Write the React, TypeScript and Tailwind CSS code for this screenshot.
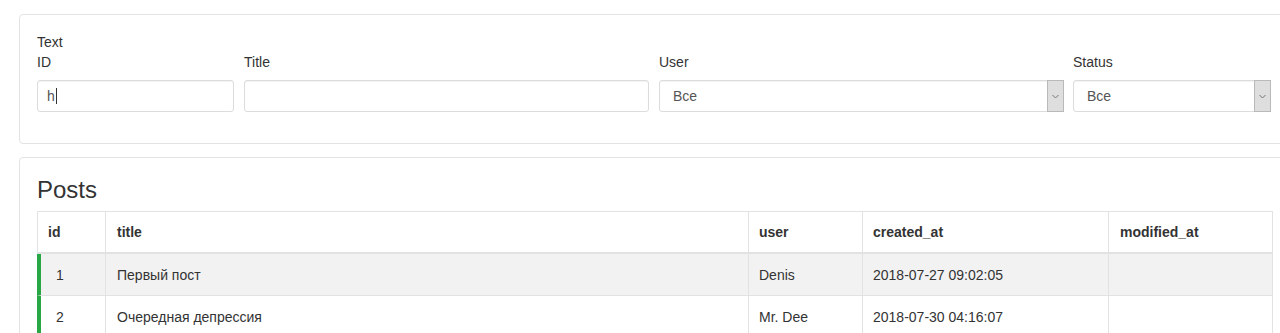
import React from 'react';

interface Post {
  id: number;
  title: string;
  user: string;
  createdAt: string;
  modifiedAt: string;
}

const posts: Post[] = [
  { id: 1, title: 'Первый пост', user: 'Denis', createdAt: '2018-07-27 09:02:05', modifiedAt: '' },
  { id: 2, title: 'Очередная депрессия', user: 'Mr. Dee', createdAt: '2018-07-30 04:16:07', modifiedAt: '' },
];

const FakeSelect: React.FC<{ value: string }> = ({ value }) => (
  <div className="flex h-[32px] rounded-[3px] border border-[#dcdcdc] bg-white shadow-[inset_0_1px_1px_rgba(0,0,0,0.05)]">
    <div className="flex flex-1 items-center pl-[13px] text-[14px] text-[#555]">{value}</div>
    <div className="-my-px -mr-px flex w-[17px] items-center justify-center border border-[#b9b9b9] bg-[#dedede]">
      <svg width="7" height="5" viewBox="0 0 7 5" fill="none">
        <path d="M0.5 1L3.5 4L6.5 1" stroke="#777" strokeWidth="1" />
      </svg>
    </div>
  </div>
);

const cols = 'grid grid-cols-[69px_643px_114px_246px_164px]';
const cell = 'flex items-center border-r border-b border-[#e2e2e2]';

const App: React.FC = () => {
  return (
    <div className="h-[333px] w-[1280px] overflow-hidden bg-white pt-[14px] text-[#333] font-['Liberation_Sans',Arial,sans-serif]">
      <div className="ml-[19px] w-[1271px]">
        {/* filters */}
        <div className="rounded-[4px] border border-[#e3e3e3] px-[17px] pt-[17px] pb-[31px]">
          <div className="text-[14px] leading-[20px]">Text</div>
          <div className="flex">
            <div className="w-[197px]">
              <label className="mb-[8px] block text-[14px] leading-[20px]">ID</label>
              <div className="flex h-[32px] items-center rounded-[3px] border border-[#dcdcdc] pl-[9px] text-[14px] text-[#555] shadow-[inset_0_1px_1px_rgba(0,0,0,0.05)]">
                h<span className="ml-px inline-block h-[16px] w-px bg-[#333]" />
              </div>
            </div>
            <div className="ml-[10px] w-[405px]">
              <label className="mb-[8px] block text-[14px] leading-[20px]">Title</label>
              <div className="h-[32px] rounded-[3px] border border-[#dcdcdc] shadow-[inset_0_1px_1px_rgba(0,0,0,0.05)]" />
            </div>
            <div className="ml-[10px] w-[405px]">
              <label className="mb-[8px] block text-[14px] leading-[20px]">User</label>
              <FakeSelect value="Все" />
            </div>
            <div className="ml-[9px] w-[198px]">
              <label className="mb-[8px] block text-[14px] leading-[20px]">Status</label>
              <FakeSelect value="Все" />
            </div>
          </div>
        </div>

        {/* posts */}
        <div className="mt-[13px] rounded-[4px] border border-[#e3e3e3] px-[17px] pt-[19px] pb-[20px]">
          <h3 className="mb-[8px] text-[24px] leading-[26px] font-normal">Posts</h3>
          <div className="w-[1236px] text-[14px]">
            <div className={`${cols} h-[43px] border-t border-[#e2e2e2] font-bold`}>
              <div className={`${cell} border-b-2 border-l pl-[10px]`}>id</div>
              <div className={`${cell} border-b-2 pl-[11px]`}>title</div>
              <div className={`${cell} border-b-2 pl-[10px]`}>user</div>
              <div className={`${cell} border-b-2 pl-[10px]`}>created_at</div>
              <div className={`${cell} border-b-2 pl-[11px]`}>modified_at</div>
            </div>
            {posts.map((post, i) => (
              <div key={post.id} className={`${cols} h-[42px] ${i % 2 === 0 ? 'bg-[#f2f2f2]' : 'bg-white'}`}>
                <div className={`${cell} border-l-4 border-l-[#28a745] pt-[2px] pl-[15px]`}>{post.id}</div>
                <div className={`${cell} pt-[2px] pl-[11px]`}>{post.title}</div>
                <div className={`${cell} pt-[2px] pl-[10px]`}>{post.user}</div>
                <div className={`${cell} pt-[2px] pl-[10px]`}>{post.createdAt}</div>
                <div className={`${cell} pt-[2px] pl-[11px]`}>{post.modifiedAt}</div>
              </div>
            ))}
          </div>
        </div>
      </div>
    </div>
  );
};

export default App;
